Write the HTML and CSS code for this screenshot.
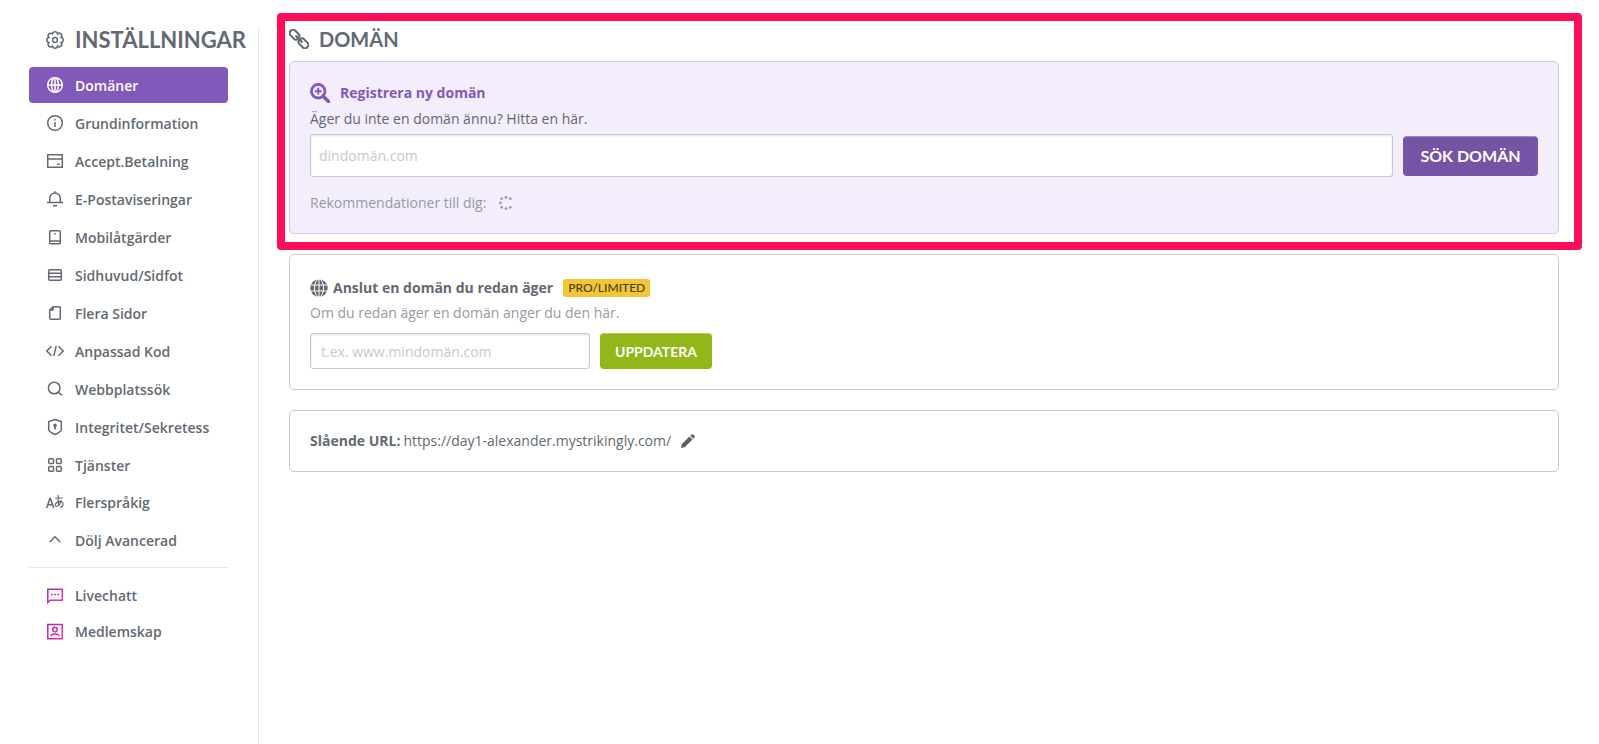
FILE: index.html
```html
<!DOCTYPE html>
<html lang="sv">
<head>
  <meta charset="UTF-8">
  <meta name="viewport" content="width=device-width, initial-scale=1.0">
  <title>Inställningar - Domän</title>
  <link rel="stylesheet" href="styles.css">
</head>
<body>
  <!-- shared gradient for the pink icons -->
  <svg class="defs" width="0" height="0" aria-hidden="true">
    <linearGradient id="pink" x1="0" y1="0" x2="18" y2="18" gradientUnits="userSpaceOnUse">
      <stop offset="0" stop-color="#8a2be2"/><stop offset="0.5" stop-color="#d428b4"/><stop offset="1" stop-color="#ff3d7f"/>
    </linearGradient>
  </svg>
  <div class="layout">
    <aside class="sidebar">
      <h1 class="sidebar-title">
        <svg class="icon" viewBox="0 0 18 18"><path d="M6.500 2.900A2.540 2.540 0 0 1 11.500 2.900 2.540 2.540 0 0 1 15.100 6.500 2.540 2.540 0 0 1 15.100 11.500 2.540 2.540 0 0 1 11.500 15.100 2.540 2.540 0 0 1 6.500 15.100 2.540 2.540 0 0 1 2.900 11.500 2.540 2.540 0 0 1 2.900 6.500 2.540 2.540 0 0 1 6.500 2.900Z"/><circle cx="9" cy="9" r="2.400"/></svg>
        INSTÄLLNINGAR
      </h1>
      <nav>
        <ul class="nav-list">
          <li><a href="#" class="nav-item active"><svg class="icon" viewBox="0 0 18 18"><circle cx="9" cy="9" r="7.300"/><ellipse cx="9" cy="9" rx="3.400" ry="7.300"/><path d="M1.700 9h14.600M9 1.700v14.600"/></svg>Domäner</a></li>
          <li><a href="#" class="nav-item"><svg class="icon" viewBox="0 0 18 18"><circle cx="9" cy="9" r="7.300"/><path d="M9 8v5M9 5v1.600"/></svg>Grundinformation</a></li>
          <li><a href="#" class="nav-item"><svg class="icon" viewBox="0 0 18 18"><path d="M1.700 2.700h14.600v12.600H1.700zM1.700 7h14.600M11 12.200h2.600"/></svg>Accept.Betalning</a></li>
          <li><a href="#" class="nav-item"><svg class="icon" viewBox="0 0 18 18"><path d="M1 12.500h16M3.700 12.500V8.300a5.300 5.300 0 0 1 10.600 0v4.200M9 3V1.200M7 15.800h4"/></svg>E-Postaviseringar</a></li>
          <li><a href="#" class="nav-item"><svg class="icon" viewBox="0 0 18 18"><rect x="3.700" y="2.700" width="10.600" height="13" rx="1"/><path d="M3.700 13h10.600M8.200 5.800h1.600"/></svg>Mobilåtgärder</a></li>
          <li><a href="#" class="nav-item"><svg class="icon" viewBox="0 0 18 18"><rect x="2.700" y="3.700" width="12.600" height="10.600" rx="1"/><path d="M2.700 7.200h12.600M2.700 10.800h12.600"/></svg>Sidhuvud/Sidfot</a></li>
          <li><a href="#" class="nav-item"><svg class="icon" viewBox="0 0 18 18"><path d="M7 2.700h6.300a1 1 0 0 1 1 1v10.600a1 1 0 0 1-1 1H4.700a1 1 0 0 1-1-1V6ZM7 2.700V6H3.700"/></svg>Flera Sidor</a></li>
          <li><a href="#" class="nav-item"><svg class="icon" viewBox="0 0 18 18"><path d="M5.500 4.200.8 9l4.700 4.800M12.500 4.200 17.200 9l-4.700 4.800M10.200 3.800 7.800 14.200"/></svg>Anpassad Kod</a></li>
          <li><a href="#" class="nav-item"><svg class="icon" viewBox="0 0 18 18"><circle cx="8.200" cy="8" r="5.800"/><path d="m12.400 12.200 3.600 3.300"/></svg>Webbplatssök</a></li>
          <li><a href="#" class="nav-item"><svg class="icon" viewBox="0 0 18 18"><path d="M9 1.500 15.300 3.600v8.200q0 2-6.300 4.700-6.300-2.700-6.300-4.700V3.600Z"/><path d="M9 7v4.200" stroke-width="1.800"/><circle class="fill" cx="9" cy="7.200" r="1.700"/></svg>Integritet/Sekretess</a></li>
          <li><a href="#" class="nav-item"><svg class="icon" viewBox="0 0 18 18"><rect x="2.700" y="2.700" width="4.800" height="4.800" rx="1"/><rect x="10.500" y="2.700" width="4.800" height="4.800" rx="1"/><rect x="2.700" y="10.500" width="4.800" height="4.800" rx="1"/><rect x="10.500" y="10.500" width="4.800" height="4.800" rx="1"/></svg>Tjänster</a></li>
        </ul>
        <ul class="nav-list nav-list-extra">
          <li><a href="#" class="nav-item"><svg class="icon" viewBox="0 0 18 18"><path d="M.7 15 4 5.200h.4L7.700 15M1.800 11.800h4.800"/><path d="M9.300 5h7.400M12.200 2q-.3 6 .6 11M15.200 7q-1.200 6-4.300 6.400-2 0-1.600-2 .8-2.600 4.500-2.800 3.500.2 3.300 2.700-.3 2.500-3 3.200" stroke-width="1.200"/></svg>Flerspråkig</a></li>
          <li><button type="button" class="nav-item"><svg class="icon" viewBox="0 0 18 18"><path d="M3.800 12 9 6.800l5.200 5.200"/></svg>Dölj Avancerad</button></li>
        </ul>
        <ul class="nav-list nav-list-apps">
          <li><a href="#" class="nav-item"><svg class="icon pink" viewBox="0 0 18 18"><path d="M1.800 16.500V3.200h14.500v11H4.200ZM5 8.400h1.700M8.200 8.400h1.700M11.400 8.400h1.700"/></svg>Livechatt</a></li>
          <li><a href="#" class="nav-item"><svg class="icon pink" viewBox="0 0 18 18"><path d="M1.800 2.400h14.400v14.400H1.800z"/><circle cx="9" cy="7.600" r="2.300"/><path d="M5 14.200q0-2.300 4-2.300t4 2.300"/></svg>Medlemskap</a></li>
        </ul>
      </nav>
    </aside>

    <main class="content">
      <section class="highlight">
        <h2 class="page-title">
          <svg class="icon icon-lg" viewBox="0 0 20 20" stroke-width="2"><rect x=".2" y="2.300" width="10.600" height="6.600" rx="2.800" transform="rotate(45 5.500 5.600)"/><rect x="9.200" y="11.100" width="10.600" height="6.600" rx="2.800" transform="rotate(45 14.500 14.400)"/><path d="m6.500 6.500 2.500 2.500M11 11l2.500 2.500"/></svg>
          DOMÄN
        </h2>
        <div class="card card-purple">
          <h3 class="card-title">
            <svg class="icon icon-lg" viewBox="0 0 20 20" stroke-width="2.800"><circle cx="8.200" cy="8.200" r="6.800"/><path d="m13.200 13.200 5.200 5.200" stroke-width="3.600" stroke-linecap="round"/><path d="M8.200 4.800v6.800M4.800 8.200h6.800" stroke-width="2"/></svg>
            Registrera ny domän
          </h3>
          <label class="text" for="search-domain">Äger du inte en domän ännu? Hitta en här.</label>
          <form class="row">
            <input type="text" id="search-domain" class="field field-lg" placeholder="dindomän.com">
            <button type="button" class="btn btn-purple">SÖK DOMÄN</button>
          </form>
          <p class="recommend">Rekommendationer till dig:
            <svg class="spinner" viewBox="0 0 14 14"><circle cx="7" cy="1.400" r="1.400"/><circle cx="11.300" cy="2.700" r="1.400"/><circle cx="2.700" cy="2.700" r="1.400"/><circle cx="1.400" cy="7" r="1.400"/><circle cx="2.700" cy="11.300" r="1.400"/><circle cx="7" cy="12.600" r="1.400"/><circle cx="11.300" cy="11.300" r="1.400"/></svg>
          </p>
        </div>
      </section>

      <section class="card">
        <h3 class="card-title connect-title">
          <svg class="icon" viewBox="0 0 18 18"><circle class="fill" cx="9" cy="9" r="8.700"/><g stroke="#fff"><ellipse cx="9" cy="9" rx="4.500" ry="9"/><path d="M9 0v18M0 6h18M0 12h18"/></g></svg>
          Anslut en domän du redan äger
          <span class="badge">PRO/LIMITED</span>
        </h3>
        <label class="text text-light" for="own-domain">Om du redan äger en domän anger du den här.</label>
        <form class="row">
          <input type="text" id="own-domain" class="field" placeholder="t.ex. www.mindomän.com">
          <button type="button" class="btn btn-green">UPPDATERA</button>
        </form>
      </section>

      <section class="card url-card">
        <strong>Slående URL:</strong>
        <span>https://day1-alexander.mystrikingly.com/</span>
        <button type="button" class="edit-btn" aria-label="Redigera URL"><svg viewBox="0 0 15 15"><path d="M0 15 .8 11 9 2.700 12.300 6 4 14.200ZM10 1.800 11.300.6q.9-.8 1.800 0l1.300 1.300q.8.900 0 1.800L13.200 5Z"/></svg></button>
      </section>
    </main>
  </div>
</body>
</html>
```
FILE: styles.css
```css
* {
  box-sizing: border-box;
}
body {
  margin: 0;
  font-family: 'Open Sans', sans-serif;
  font-size: 14px;
  line-height: 20px;
  color: #636972;
  background: #fff;
}
h1, h2, h3, p, ul {
  margin: 0;
  padding: 0;
}
ul {
  list-style: none;
}
button, input {
  font-family: inherit;
  font-size: inherit;
}
.defs {
  position: absolute;
}
.icon {
  flex: none;
  width: 18px;
  height: 18px;
  fill: none;
  stroke: currentColor;
}
.nav-item .icon,
.sidebar-title .icon {
  stroke-width: 1.5;
}
.nav-item .icon {
  margin-bottom: 2px;
}
.icon .fill {
  fill: currentColor;
  stroke: none;
}
.icon.pink {
  stroke: url(#pink);
}
.icon-lg {
  width: 20px;
  height: 20px;
}
.layout {
  display: flex;
  min-height: 100vh;
  padding: 29px 40px 0 29px;
}

/* sidebar */
.sidebar {
  flex: none;
  width: 230px;
  padding-right: 30px;
  border-right: 1px solid #e2e4e7;
}
.sidebar-title,
.page-title {
  display: flex;
  align-items: center;
  font-family: Lato, sans-serif;
  font-weight: 700;
  white-space: nowrap;
}
.sidebar-title {
  gap: 11px;
  height: 22px;
  margin-bottom: 16px;
  padding-left: 17px;
  font-size: 22px;
}
.nav-list {
  display: flex;
  flex-direction: column;
  gap: 2px;
}
.nav-item {
  display: flex;
  align-items: center;
  gap: 11px;
  width: 100%;
  height: 36px;
  padding: 2px 0 0 17px;
  border: none;
  border-radius: 4px;
  background: none;
  color: #636972;
  font-weight: 600;
  text-decoration: none;
  cursor: pointer;
}
.nav-item.active {
  background: #8159bb;
  color: #fff;
}
.nav-list-extra {
  gap: 1px;
  padding: 1px 0 10px;
  border-bottom: 1px solid #e8e9eb;
}
.nav-list-apps {
  gap: 0;
  padding-top: 9px;
}

/* main column */
.content {
  flex: 1;
  display: flex;
  flex-direction: column;
  gap: 20px;
  padding-left: 30px;
}
.highlight {
  position: relative;
}
.highlight::after {
  content: '';
  position: absolute;
  inset: -16px -23px -16px -12px;
  border: 8px solid #ff0d57;
  border-radius: 4px;
  pointer-events: none;
}
.page-title {
  gap: 10px;
  height: 20px;
  margin-bottom: 12px;
  font-size: 20px;
}
.card {
  padding: 20px;
  border: 1px solid #c8cbd0;
  border-radius: 5px;
}
.card-purple {
  background: #f3edfc;
  border-color: #d5c6ee;
}
.card-title {
  display: flex;
  align-items: center;
  gap: 10px;
  height: 22px;
  margin-bottom: 5px;
  font-size: 14px;
  font-weight: 700;
}
.card-purple .card-title {
  color: #8159bb;
}
.connect-title {
  gap: 5px;
  height: 25px;
  margin-bottom: 3px;
}
.text {
  display: block;
  margin-bottom: 5px;
}
.text-light,
.recommend {
  color: #959aa3;
}
.text-light {
  margin-bottom: 10px;
}
.row {
  display: flex;
  align-items: center;
  gap: 10px;
}
.field {
  width: 280px;
  height: 36px;
  padding: 0 10px;
  border: 1px solid #c6c9cd;
  border-radius: 3px;
  background: #fff;
  box-shadow: inset 0 1px 2px rgba(0, 0, 0, 0.12);
  color: #636972;
}
.field-lg {
  flex: 1;
  height: 43px;
  padding: 0 8px;
}
.field::placeholder {
  color: #c6c9cd;
  opacity: 1;
}
.btn {
  border: none;
  border-radius: 4px;
  box-shadow: inset 0 2px 0 -1px rgba(255, 255, 255, 0.3);
  color: #fff;
  font-family: Lato, sans-serif;
  font-weight: 700;
  cursor: pointer;
}
.btn-purple {
  width: 135px;
  height: 40px;
  background: #7654a5;
  font-size: 16px;
}
.btn-green {
  width: 112px;
  height: 36px;
  background: #93b719;
}
.recommend {
  display: flex;
  align-items: center;
  gap: 13px;
  margin-top: 16px;
}
.spinner {
  width: 14px;
  height: 14px;
  fill: #9a9ca8;
}
.badge {
  margin-left: 5px;
  padding: 0 5px;
  border-radius: 3px;
  background: #f2c634;
  color: #4a4022;
  font-family: Lato, sans-serif;
  font-size: 12px;
  font-weight: 500;
  line-height: 18px;
}
.url-card {
  display: flex;
  align-items: center;
  gap: 3px;
}
.edit-btn {
  display: flex;
  margin-left: 7px;
  padding: 0;
  border: none;
  background: none;
  cursor: pointer;
}
.edit-btn svg {
  width: 14px;
  height: 14px;
  fill: #55616b;
}
```
